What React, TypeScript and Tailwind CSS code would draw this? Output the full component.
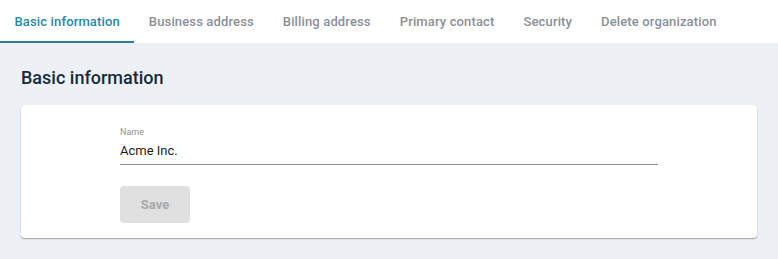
import React from "react";

const tabs = [
  "Basic information",
  "Business address",
  "Billing address",
  "Primary contact",
  "Security",
  "Delete organization",
];

export default function App() {
  return (
    <div className="w-[778px] h-[259px] bg-[#edf1f6] font-['Roboto',sans-serif] overflow-hidden">
      <div className="flex h-[43px] bg-white">
        {tabs.map((t, i) => (
          <div
            key={t}
            className={
              i === 0
                ? "relative flex items-center px-[14.5px] text-[13px] tracking-[0.14px] font-medium text-[#1f8aa8]"
                : "relative flex items-center px-[14.5px] text-[13px] tracking-[0.14px] font-medium text-[#8a9097]"
            }
          >
            {t}
            {i === 0 && <div className="absolute left-0 right-0 bottom-0 h-[2px] bg-[#2b7f96]" />}
          </div>
        ))}
      </div>
      <div className="px-[21px]">
        <h1 className="pt-[23px] h-[62px] text-[18px] font-medium text-[#172a3c] leading-[24px]">
          Basic information
        </h1>
        <div className="bg-white rounded-[4px] shadow-[0_1px_1.5px_rgba(0,0,0,0.35)] px-[99px] pt-[22px] pb-[15px]">
          <div className="text-[9px] text-[#8e949a] leading-[11px]">Name</div>
          <div className="text-[13px] text-[#1c1c1c] leading-[18px] mt-[4px] pb-[4px] border-b border-[#8c8c8c]">
            Acme Inc.
          </div>
          <button className="mt-[21px] w-[70px] h-[37px] rounded-[4px] bg-[#e0e0e0] text-[13px] font-bold text-[#a8a8a8]">
            Save
          </button>
        </div>
      </div>
    </div>
  );
}
